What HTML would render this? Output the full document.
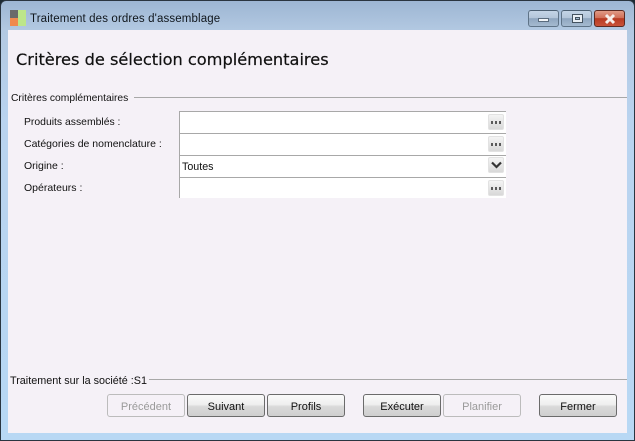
<!DOCTYPE html>
<html><head><meta charset="utf-8">
<style>
html,body{margin:0;padding:0;width:635px;height:441px;overflow:hidden;background:#1c2a33}
*{box-sizing:border-box}
div{position:absolute}
.t{font-family:"Liberation Sans",sans-serif;font-size:11px;color:#111;white-space:nowrap;line-height:13px}
.win{left:0;top:0;width:635px;height:441px;border-radius:6px 6px 0 0;border:1px solid #2a3540;background:linear-gradient(180deg,#9db6d3 0,#b3c9e2 30px,#b9d3ef 120px,#b8d8f4 100%)}
.client{left:8px;top:30px;width:619px;height:403px;background:#f5f1f7}
.inp{left:179px;width:327px;height:22px;background:#fff;border-top:1.5px solid #a8a8a8;border-left:1px solid #a8a8a8}
.btn3{width:16px;height:16px;border:1px solid #e2e2e2;border-radius:2px;background:linear-gradient(180deg,#f4f4f4,#d8d8d8)}
.dots{left:2px;top:6px;width:11px;height:3px;background:repeating-linear-gradient(90deg,#5a5a5a 0 2px,transparent 2px 4px)}
.b{top:394px;height:23px;width:78px;border:1px solid #6b6b6b;border-radius:3px;background:linear-gradient(180deg,#fafafa 0,#efefef 45%,#d9d9d9 55%,#cfcfcf 100%);text-align:center;font-family:"Liberation Sans",sans-serif;font-size:11px;line-height:24px;color:#111}
.d{border-color:#bcbcbc;background:#f5f1f7;color:#9a9a9a}
.cb{top:10px;height:17px;border:1px solid #5f7387;border-top-color:#4c5f72;border-radius:3px;background:linear-gradient(180deg,#c4d4e6 0,#b4c6da 45%,#8fa6bf 50%,#a5bad0 100%)}
</style></head><body>
<div class="win"></div>
<div class="client"></div>
<svg style="position:absolute;left:10px;top:10px" width="16" height="16"><rect x="0" y="0" width="8" height="8" fill="#6a6a6a"/><rect x="0" y="8" width="8" height="8" fill="#f08a4e"/><rect x="8" y="0" width="8" height="16" fill="#bde68a"/></svg>
<div class="t" style="left:30px;top:13px;font-size:11.5px;color:#10161c;letter-spacing:.13px">Traitement des ordres d'assemblage</div>
<div class="cb" style="left:528px;width:31px"><div style="left:9px;top:7px;width:11px;height:4px;background:#f2f5f8;border:1px solid #5a6b7d"></div></div>
<div class="cb" style="left:561px;width:31px"><div style="left:10px;top:3px;width:11px;height:9px;background:#e8eef4;border:1px solid #44525f"></div><div style="left:13px;top:6px;width:5px;height:3px;background:#a5bad0;border:1px solid #44525f"></div></div>
<div class="cb" style="left:594px;width:31px;border-color:#5c2a22;background:linear-gradient(180deg,#e09a85 0,#d0705a 45%,#b83a22 50%,#c9533a 100%)"><svg style="position:absolute;left:9px;top:2px" width="12" height="12"><path d="M2 2L10 10M10 2L2 10" stroke="#f6eeea" stroke-width="3"/></svg></div>

<div class="t" style="left:16px;top:50px;font-family:'DejaVu Sans',sans-serif;font-size:16.2px;line-height:19px;color:#111;-webkit-text-stroke:.2px #111">Critères de sélection complémentaires</div>

<div class="t" style="left:11px;top:92px;font-size:10.3px">Critères complémentaires</div>
<div style="left:134px;top:97px;width:493px;height:1px;background:#a8a8a8"></div>

<div class="t" style="left:24px;top:116px;font-size:10.4px">Produits assemblés :</div>
<div class="t" style="left:24px;top:138px;font-size:10.5px">Catégories de nomenclature :</div>
<div class="t" style="left:24px;top:160px;font-size:10.5px">Origine :</div>
<div class="t" style="left:24px;top:182px;font-size:10.5px">Opérateurs :</div>

<div class="inp" style="top:111px"><div class="btn3" style="left:308px;top:2px"><div class="dots"></div></div></div>
<div class="inp" style="top:133px"><div class="btn3" style="left:308px;top:2px"><div class="dots"></div></div></div>
<div class="inp" style="top:155px"><div class="t" style="left:2px;top:5px;font-size:10.7px">Toutes</div><div class="btn3" style="left:308px;top:1px"><svg style="position:absolute;left:2px;top:3px" width="11" height="8"><path d="M1 1.5L5.5 6L10 1.5" fill="none" stroke="#333" stroke-width="2.2"/></svg></div></div>
<div class="inp" style="top:177px;height:21px"><div class="btn3" style="left:308px;top:2px"><div class="dots"></div></div></div>

<div class="t" style="left:10px;top:375px;font-size:10.8px">Traitement sur la société :S1</div>
<div style="left:149px;top:379px;width:478px;height:1px;background:#a8a8a8"></div>

<div class="b d" style="left:107px">Précédent</div>
<div class="b" style="left:187px">Suivant</div>
<div class="b" style="left:267px">Profils</div>
<div class="b" style="left:363px">Exécuter</div>
<div class="b d" style="left:443px">Planifier</div>
<div class="b" style="left:539px">Fermer</div>
</body></html>
